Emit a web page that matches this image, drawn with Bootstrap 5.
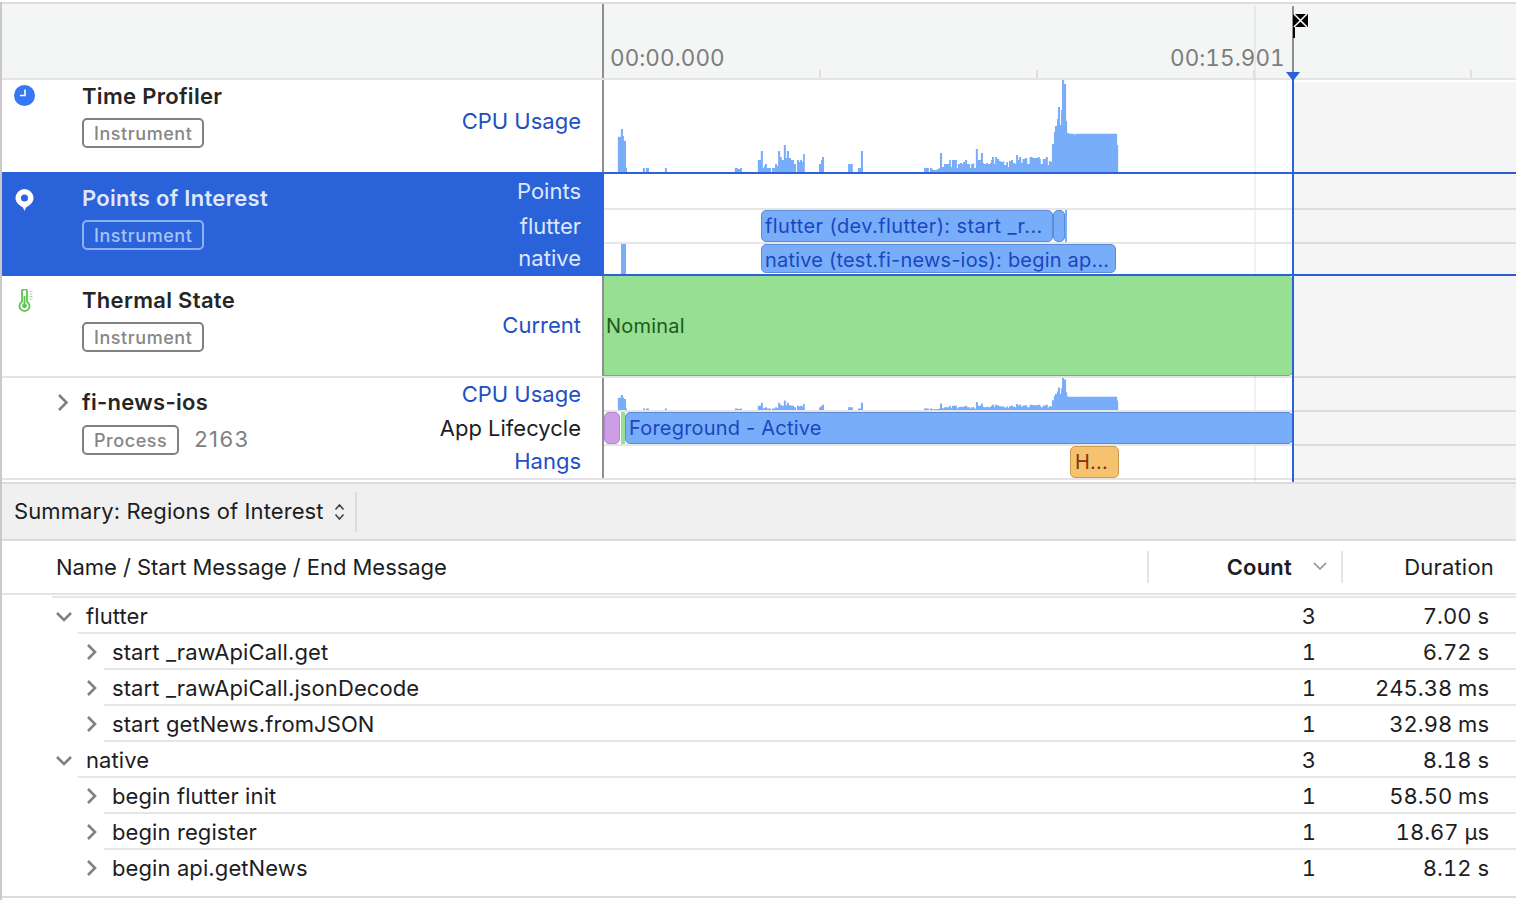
<!DOCTYPE html>
<html lang="en">
<head>
  <meta charset="UTF-8">
  <title>Instruments - Regions of Interest</title>
  <link href="https://cdn.jsdelivr.net/npm/bootstrap@5.3.0/dist/css/bootstrap.min.css" rel="stylesheet">
  <style>
    body {
      font-family: Inter, "Liberation Sans", sans-serif;
      font-size: 22px;
      letter-spacing: .2px;
      color: #1d1d1f;
      background: #fff;
      overflow: hidden;
    }
    .app { position: relative; height: 900px; border-left: 2px solid #c9c9c9; }
    .track { display: flex; }
    .side { width: 600px; flex: none; display: flex; }
    .timeline { position: relative; flex: 1; border-left: 2px solid #8e8e93; }

    .ruler { height: 78px; margin-top: 2px; border-top: 2px solid #dcdcdc; border-bottom: 2px solid #e4e4e4; background: #f4f5f5; }
    .ruler .timeline { color: #7d7d7d; font-size: 22.5px; letter-spacing: .05px; font-variant-numeric: tabular-nums; }
    .stamp { position: absolute; top: 39px; line-height: 30px; }
    .tick { position: absolute; bottom: 0; width: 2px; height: 8px; background: #e0e0e0; }

    .track-icon { width: 80px; flex: none; position: relative; }
    .track-icon svg { position: absolute; }
    .track-name { font-weight: 600; line-height: 30px; margin-top: 1px; letter-spacing: .3px; color: #262626; }
    .kind { display: inline-block; height: 30px; line-height: 28px; padding: 0 10px; margin-top: 7px; border: 2px solid #808080; border-radius: 5px; color: #868686; font-size: 18px; font-weight: 500; letter-spacing: .55px; }
    .pid { color: #808080; margin-left: 15px; letter-spacing: 1.400px; margin-top: 6px; }
    .lane-names { margin-left: auto; margin-top: -1px; padding-right: 21px; text-align: right; color: #1f4fc4; letter-spacing: 0; }
    .lane-names > div { display: flex; align-items: center; justify-content: flex-end; }

    .is-selected { border-top: 2px solid #2a62d9; border-bottom: 2px solid #2a62d9; }
    .is-selected .side { background: #2a62d9; margin: -2px 0; padding: 2px 0; }
    .is-selected .track-name { color: #dfe8fb; }
    .is-selected .timeline { border-left-color: #2a62d9; }
    .is-selected .lane-names { color: #dfe8fb; }
    .is-selected .kind { border-color: #8fb0ef; color: #a9c3f5; }
    .is-plain { border-bottom: 2px solid #e4e4e4; }

    .lane { position: relative; border-bottom: 2px solid #e6e6e6; }
    .lane-open { border-bottom: 0; }
    .chart { display: block; }
    .span { position: absolute; white-space: nowrap; overflow: hidden; border-radius: 5px; border: 1px solid #5e8ad6; background: #77adf9; color: #1c46bd; padding-left: 3px; line-height: 30px; font-size: 20px; letter-spacing: .2px; }
    .span-wide { letter-spacing: .4px; }
    .span-thin { border: 0; border-radius: 0; padding: 0; }
    .span-green { background: #97df92; border-color: #6fb56b; color: #1d5a1c; }
    .span-purple { background: #cb9ee5; border-color: #b585d0; }
    .span-orange { background: #f5c26f; border-color: #c99a50; color: #84330e; padding-left: 4px; }

    .grid-line { position: absolute; top: 4px; height: 476px; left: 1252px; width: 2px; background: rgba(0,0,0,.05); pointer-events: none; }
    .future { position: absolute; top: 80px; height: 400px; left: 1292px; right: 0; background: rgba(0,0,0,.04); pointer-events: none; }
    .head-line { position: absolute; top: 4px; left: 1290px; width: 2px; height: 68px; background: #8e8e93; }
    .play-line { position: absolute; top: 72px; left: 1290px; width: 2px; height: 408px; background: #2a62d9; }
    .play-tip { position: absolute; top: 70px; left: 1284px; }
    .flag { position: absolute; top: 12px; left: 1291px; }

    .summary { margin-top: 2px; height: 59px; border-top: 2px solid #dcdcdc; border-bottom: 2px solid #dcdcdc; background: #f0f0f0; padding-left: 12px; letter-spacing: .1px; }
    .summary svg { margin-left: 10px; }
    .summary-sep { width: 2px; height: 40px; background: #dcdcdc; margin-left: 10px; }

    .tree-head { height: 54px; border-bottom: 2px solid #e4e4e4; margin-bottom: 1px; }
    .tree-head .col-name { padding-left: 54px; letter-spacing: -.05px; }
    .col-name { width: 1145px; flex: none; }
    .col-count { width: 194px; flex: none; text-align: right; padding-right: 25px; font-variant-numeric: tabular-nums; letter-spacing: 0; }
    .col-dur { width: 175px; flex: none; text-align: right; padding-right: 27px; font-variant-numeric: tabular-nums; letter-spacing: 0; }
    .head-cell { height: 32px; line-height: 32px; border-left: 2px solid #e4e4e4; letter-spacing: .2px; }
    .head-cell.col-dur { padding-right: 22px; }
    .head-cell.col-count { padding-right: 49px; position: relative; font-weight: 600; }
    .head-cell.col-count svg { position: absolute; right: 14px; top: 11px; }

    .tree-rows { margin-left: 50px; border-top: 2px solid #e6e6e6; }
    .tree-row { height: 36px; padding-top: 2px; border-bottom: 2px solid #e6e6e6; }
    .tree-row:last-child { border-bottom-color: transparent; }
    .tree-row.level-0 { margin-left: 26px; }
    .tree-row.level-1 { margin-left: 52px; }
    .tree-row .col-name { flex: 1; width: auto; display: flex; align-items: center; padding-left: 8px; letter-spacing: .1px; }
    .arrow { width: 0; flex: none; }
    .level-0 .arrow { margin-left: -31px; margin-right: 31px; }
    .level-1 .arrow { margin-left: -26px; margin-right: 26px; }
    .tree-end { margin-top: 10px; border-top: 2px solid #dcdcdc; }
  </style>
</head>
<body>

<div class="app">
  <div class="grid-line"></div>

  <div class="track ruler">
    <div class="side"></div>
    <div class="timeline">
      <div class="stamp" style="left:6px">00:00.000</div>
      <div class="stamp" style="left:566px">00:15.901</div>
      <div class="tick" style="left:215px"></div>
      <div class="tick" style="left:432px"></div>
      <div class="tick" style="left:649px"></div>
      <div class="tick" style="left:866px"></div>
    </div>
  </div>

  <div class="track" style="height:92px">
    <div class="side">
      <div class="track-icon">
        <svg style="left:12px;top:5px" width="21" height="21" viewBox="0 0 21 21"><circle cx="10.5" cy="10.5" r="10.5" fill="#3478f6"/><path d="M11 4.5V10.5H6" fill="none" stroke="#fff" stroke-width="1.6"/></svg>
      </div>
      <div>
        <div class="track-name">Time Profiler</div>
        <div class="kind">Instrument</div>
      </div>
      <div class="lane-names d-flex align-items-center pb-2">CPU Usage</div>
    </div>
    <div class="timeline"><svg class="chart js-cpu" width="526" height="92" viewBox="12 30 1556 276" preserveAspectRatio="none"></svg></div>
  </div>

  <div class="track is-selected" style="height:104px">
    <div class="side">
      <div class="track-icon">
        <svg style="left:13px;top:15px" width="19" height="22" viewBox="0 0 19 22"><path fill-rule="evenodd" d="M9.5 0a9 9 0 0 1 9 9c0 4.6-4 7.6-7.5 9.500L9.500 22 8 18.500C4.500 16.600.500 13.600.500 9a9 9 0 0 1 9-9zm0 5.500a3.500 3.500 0 1 0 0 7 3.500 3.500 0 0 0 0-7z" fill="#fff"/></svg>
      </div>
      <div>
        <div class="track-name" style="margin-top:9px">Points of Interest</div>
        <div class="kind">Instrument</div>
      </div>
      <div class="lane-names">
        <div style="height:36px">Points</div>
        <div style="height:34px">flutter</div>
        <div style="height:30px">native</div>
      </div>
    </div>
    <div class="timeline">
      <div class="lane" style="height:36px"></div>
      <div class="lane" style="height:34px">
        <div class="span span-wide" style="left:157px;top:0;width:292px;height:32px">flutter (dev.flutter): start _r...</div>
        <div class="span" style="left:449px;top:0;width:12px;height:32px"></div>
        <div class="span span-thin" style="left:461px;top:0;width:2px;height:32px"></div>
      </div>
      <div class="lane lane-open" style="height:30px">
        <div class="span span-thin" style="left:17px;top:0;width:5px;height:30px"></div>
        <div class="span" style="left:157px;top:0;width:355px;height:29px">native (test.fi-news-ios): begin ap...</div>
      </div>
    </div>
  </div>

  <div class="track is-plain" style="height:102px">
    <div class="side">
      <div class="track-icon">
        <svg style="left:16px;top:13px" width="16" height="23" viewBox="0 0 16 23"><path d="M4 2.500a2.500 2.500 0 0 1 5 0v10.200a5 5 0 1 1-5 0z" fill="none" stroke="#5cc453" stroke-width="1.800"/><circle cx="6.500" cy="16.800" r="2.400" fill="#5cc453"/><path d="M6.500 7v9" stroke="#5cc453" stroke-width="1.800"/><path d="M11.500 2.500h3M11.500 5h3M11.500 7.500h3M11.500 10h3" stroke="#9fdd99" stroke-width="1.200"/></svg>
      </div>
      <div>
        <div class="track-name" style="margin-top:9px">Thermal State</div>
        <div class="kind">Instrument</div>
      </div>
      <div class="lane-names d-flex align-items-center">Current</div>
    </div>
    <div class="timeline">
      <div class="span span-green" style="left:0;top:0;width:689px;height:100px;line-height:100px;padding-left:2px;border-width:0 1px 1px 0;border-radius:0 5px 5px 0">Nominal</div>
    </div>
  </div>

  <div class="track is-plain" style="height:102px">
    <div class="side">
      <div class="track-icon">
        <svg style="left:55px;top:15px" width="12" height="19" viewBox="0 0 12 19"><path d="M2 2l7.500 7.500L2 17" fill="none" stroke="#808080" stroke-width="2.600"/></svg>
      </div>
      <div>
        <div class="track-name" style="margin-top:9px">fi-news-ios</div>
        <div class="d-flex align-items-center"><span class="kind">Process</span><span class="pid">2163</span></div>
      </div>
      <div class="lane-names">
        <div style="height:34px">CPU Usage</div>
        <div style="height:34px;color:#1d1d1f">App Lifecycle</div>
        <div style="height:32px">Hangs</div>
      </div>
    </div>
    <div class="timeline">
      <div class="lane" style="height:34px"><svg class="chart js-cpu" width="526" height="32" viewBox="12 30 1556 276" preserveAspectRatio="none"></svg></div>
      <div class="lane" style="height:34px">
        <div class="span span-purple" style="left:0;top:0;width:16px;height:32px"></div>
        <div class="span span-thin span-green" style="left:17px;top:0;width:4px;height:32px"></div>
        <div class="span" style="left:21px;top:0;width:668px;height:32px">Foreground - Active</div>
      </div>
      <div class="lane lane-open" style="height:32px">
        <div class="span span-orange" style="left:466px;top:0;width:49px;height:32px">H...</div>
      </div>
    </div>
  </div>

  <div class="future"></div>
  <div class="head-line"></div>
  <div class="play-line"></div>
  <svg class="play-tip" width="14" height="9" viewBox="0 0 14 9"><path d="M0 0h14L7 9z" fill="#2a62d9"/></svg>
  <svg class="flag" width="15" height="24" viewBox="0 0 15 24"><path d="M0 0h2v24H0z" fill="#000"/><path d="M0 0h15v13H0z" fill="#000"/><path d="M1 0l13 13M14 0 1 13" stroke="#fff" stroke-width="1.500"/></svg>

  <div class="summary d-flex align-items-center">
    <span>Summary: Regions of Interest</span>
    <svg width="11" height="18" viewBox="0 0 11 18"><path d="M1.500 6.500 5.500 2l4 4.500M1.500 11.500l4 4.500 4-4.500" fill="none" stroke="#444" stroke-width="1.600"/></svg>
    <div class="summary-sep"></div>
  </div>

  <div class="tree-head d-flex align-items-center">
    <div class="col-name">Name / Start Message / End Message</div>
    <div class="col-count head-cell">Count<svg width="14" height="9" viewBox="0 0 14 9"><path d="M1 1l6 6 6-6" fill="none" stroke="#888" stroke-width="1.500"/></svg></div>
    <div class="col-dur head-cell">Duration</div>
  </div>

  <div class="tree-rows" id="tree"></div>
  <div class="tree-end"></div>
</div>

<script>
  // [x, top] in zoomed picture units, each bar runs up to the next x, top 306 means empty
  const cpu = [
    [53,200],[62,177],[68,198],[71,212],[77,294],[80,306],[127,294],[133,306],[136,294],[145,306],[192,294],[198,306],
    [399,294],[408,297],[414,294],[420,306],[467,270],[476,243],[482,294],[485,288],[488,282],[494,294],[506,306],
    [509,294],[518,282],[524,288],[527,243],[533,261],[538,270],[544,225],[550,264],[553,243],[559,264],[565,270],
    [574,282],[580,306],[583,270],[589,276],[592,270],[598,276],[601,252],[606,306],[648,282],[654,270],[657,261],
    [663,306],[734,282],[748,306],[763,294],[772,243],[778,306],[959,294],[973,306],[976,294],[982,297],[985,300],
    [997,297],[1003,294],[1006,249],[1012,291],[1018,282],[1033,270],[1038,291],[1041,270],[1056,294],[1059,282],
    [1065,279],[1071,282],[1074,276],[1080,270],[1086,282],[1095,294],[1098,282],[1104,279],[1107,294],[1112,237],
    [1118,270],[1127,249],[1133,279],[1136,282],[1142,279],[1148,282],[1154,279],[1157,270],[1160,261],[1166,282],
    [1169,261],[1175,267],[1181,273],[1187,276],[1193,273],[1196,285],[1202,276],[1207,291],[1210,273],[1216,270],
    [1222,279],[1228,282],[1231,255],[1237,270],[1240,261],[1246,279],[1250,267],[1258,264],[1264,282],[1271,261],
    [1280,264],[1295,261],[1301,267],[1304,282],[1310,267],[1319,261],[1325,285],[1328,273],[1334,276],[1337,222],
    [1343,186],[1346,168],[1352,147],[1355,111],[1361,165],[1364,120],[1367,30],[1373,42],[1379,153],[1382,189],
    [1388,191],[1404,194],[1407,191],[1530,225],[1533,306]
  ];
  let d = '';
  cpu.forEach((bar, i) => {
    const next = cpu[i + 1];
    if (next && bar[1] < 306) d += `M${bar[0]} 306V${bar[1]}H${next[0]}V306z`;
  });
  document.querySelectorAll('.js-cpu').forEach(svg => {
    svg.innerHTML = `<path d="${d}" fill="#77adf9"/>`;
  });

  const rows = [
    [0, 'flutter', 3, '7.00 s'],
    [1, 'start _rawApiCall.get', 1, '6.72 s'],
    [1, 'start _rawApiCall.jsonDecode', 1, '245.38 ms'],
    [1, 'start getNews.fromJSON', 1, '32.98 ms'],
    [0, 'native', 3, '8.18 s'],
    [1, 'begin flutter init', 1, '58.50 ms'],
    [1, 'begin register', 1, '18.67 µs'],
    [1, 'begin api.getNews', 1, '8.12 s']
  ];
  const down = '<svg width="18" height="11" viewBox="0 0 18 11" style="flex:none"><path d="M2 2l7 7 7-7" fill="none" stroke="#808080" stroke-width="2.600"/></svg>';
  const right = '<svg width="11" height="18" viewBox="0 0 11 18" style="flex:none"><path d="M2 2l7 7-7 7" fill="none" stroke="#808080" stroke-width="2.600"/></svg>';
  document.getElementById('tree').innerHTML = rows.map(r => `
    <div class="tree-row level-${r[0]} d-flex align-items-center">
      <div class="col-name"><span class="arrow d-flex align-items-center">${r[0] ? right : down}</span>${r[1]}</div>
      <div class="col-count">${r[2]}</div>
      <div class="col-dur">${r[3]}</div>
    </div>`).join('');
</script>

<script src="https://cdn.jsdelivr.net/npm/bootstrap@5.3.0/dist/js/bootstrap.bundle.min.js"></script>
</body>
</html>
